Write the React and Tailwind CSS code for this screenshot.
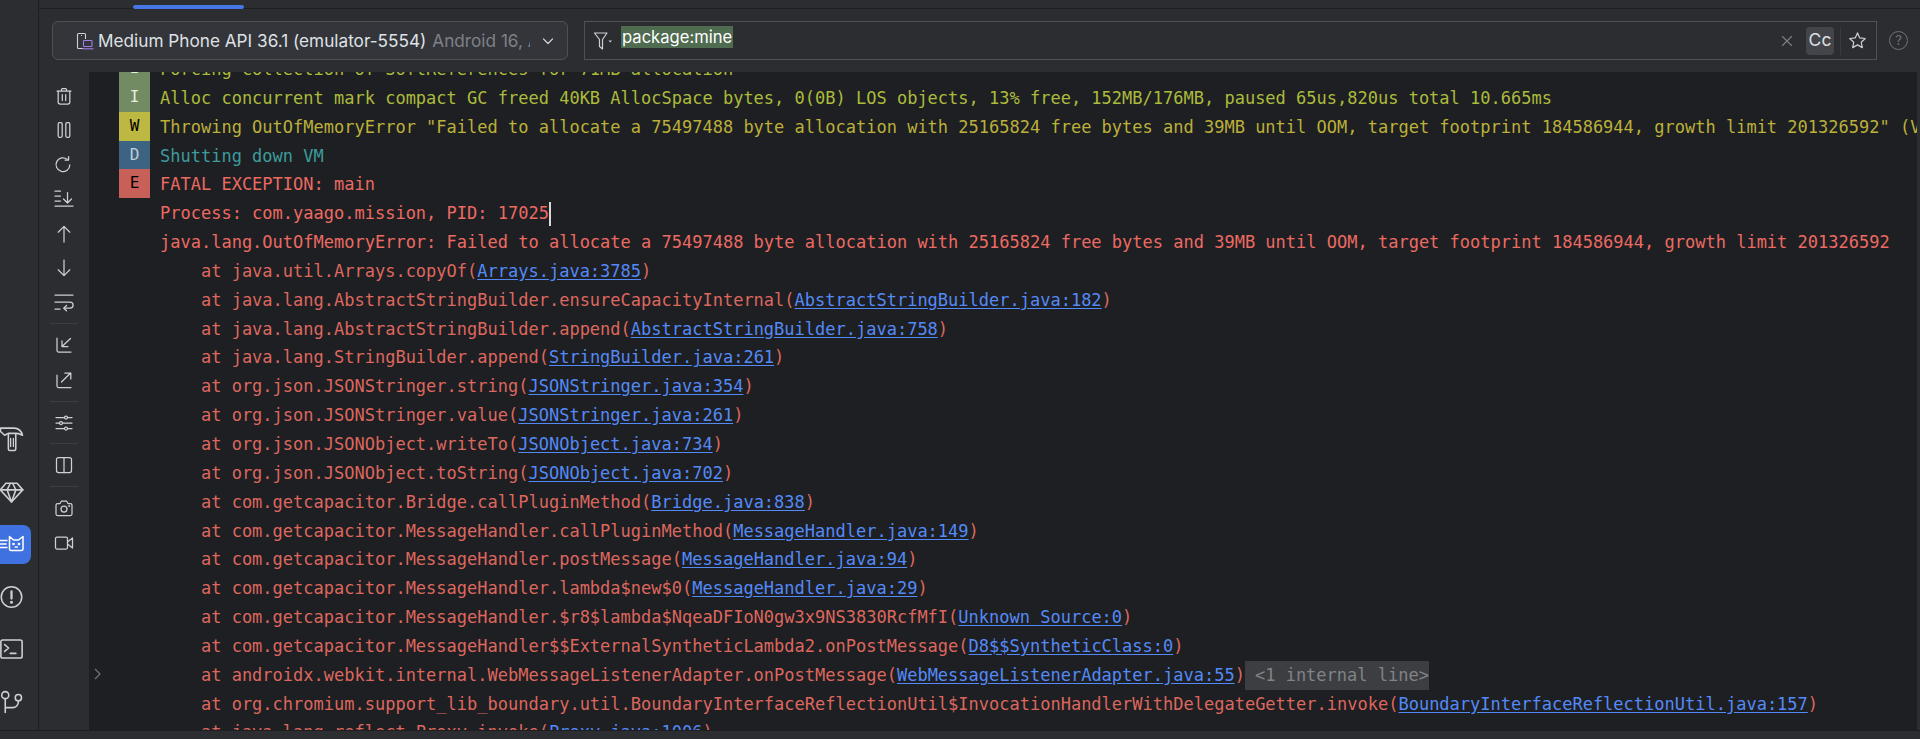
import React from "react";

const mono = "font-['DejaVu_Sans_Mono',monospace]";
const ui = "font-['Inter',sans-serif]";

const Ic = ({ size = 20, children, className = "" }) => (
  <svg width={size} height={size} viewBox="0 0 20 20" fill="none" stroke="currentColor" strokeWidth="1.25" strokeLinecap="round" strokeLinejoin="round" className={className}>
    {children}
  </svg>
);

const tools = [
  [<><path d="M3 5h14M7.5 5V3.5a1 1 0 0 1 1-1h3a1 1 0 0 1 1 1V5" /><path d="M4.2 5v11a2 2 0 0 0 2 2h7.6a2 2 0 0 0 2-2V5" /><path d="M8.3 8.5v6M11.7 8.5v6" /></>],
  [<><rect x="4.2" y="2.7" width="4" height="14.6" rx="1.2" /><rect x="11.8" y="2.7" width="4" height="14.6" rx="1.2" /></>],
  [<><path d="M15.8 9.9a6.9 6.9 0 1 1-2.6-5.6" /><path d="M14.6 1.5v3.6H11" /></>],
  [<><path d="M1 17h18M1 7h5.5M1 12h5.5M1 2.2h5.5" /><path d="M13.5 3.5v10M9.5 10l4 4 4-4" /></>],
  [<path d="M10 18V2.5M4.2 8.2 10 2.4l5.8 5.8" />],
  [<path d="M10 2v15.5M4.2 11.8 10 17.6l5.8-5.8" />],
  [<><path d="M1 3h18M1 10h15a2.7 2.7 0 0 1 0 6.2H10" /><path d="M12.5 13.5 9.8 16.2l2.7 2.6M1 17h5" /></>],
  "sep",
  [<><path d="M3 3v12.5a1.5 1.5 0 0 0 1.5 1.5H17" /><path d="M16.5 3.5 8 11.5M8 5.8v5.8h6" /></>],
  [<><path d="M3 5v11a1.5 1.5 0 0 0 1.5 1.5H17" /><path d="M7.5 12 16.6 3M10.8 3h6v6" /></>],
  "sep",
  [<><path d="M2 4.5h16M2 10h16M2 15.5h16" /><circle cx="12" cy="4.5" r="1.5" fill="#2b2d30" /><circle cx="7" cy="10" r="1.5" fill="#2b2d30" /><circle cx="12" cy="15.5" r="1.5" fill="#2b2d30" /></>],
  "sep",
  [<><rect x="2.5" y="2.5" width="15" height="15" rx="2" /><path d="M10 2.5v15" /></>],
  "sep",
  [<><path d="M2 7a1.5 1.5 0 0 1 1.5-1.5H6L7.5 3h5L14 5.5h2.5A1.5 1.5 0 0 1 18 7v9a1.5 1.5 0 0 1-1.5 1.5h-13A1.5 1.5 0 0 1 2 16z" /><circle cx="10" cy="11" r="3" /><circle cx="15.2" cy="8" r=".4" /></>],
  [<><rect x="1.5" y="4" width="12" height="12" rx="1.5" /><path d="m13.5 9 5-4v10l-5-4" /></>],
];

const side = [
  <Ic size={26}><path d="M1.200 1.300h11c3 0 5.600 2.200 6.600 5.700-2-1.200-3.800-1.600-5.400-1.500H7.300L4.500 7 1.200 4z" /><path d="M7.500 6v12a1.200 1.200 0 0 0 1.200 1.200h3.500a1.200 1.200 0 0 0 1.200-1.200V6" /><path d="M9.300 9.500v6.500M11.500 9.500v6.500" strokeWidth="1" /></Ic>,
  <Ic size={26}><path d="M5.500 3h9L19 8.300 10 18 1 8.300z" /><path d="M1 8.300h18M6.500 8.300 10 18l3.500-9.700M6.500 8.300 9 3.200M13.500 8.300 11 3.200" /></Ic>,
  null,
  <Ic size={26}><circle cx="10" cy="10" r="8.200" /><path d="M10 5.500v5.700" strokeWidth="1.800" /><circle cx="10" cy="14.200" r=".6" fill="currentColor" /></Ic>,
  <Ic size={26}><rect x="1.500" y="2.800" width="17" height="14.400" rx="1.500" /><path d="m4.500 6.500 3.200 2.700-3.200 2.700M9 13.500h4.500" /></Ic>,
  <Ic size={26}><circle cx="5" cy="4.500" r="2.800" /><circle cx="15.500" cy="6.500" r="2.500" /><path d="M5 7.300v11M5 14.500h6a4.500 4.500 0 0 0 4.500-4.500V9" /></Ic>,
];

const L = ({ children }) => <span className="text-[#548af7] underline underline-offset-2">{children}</span>;

const at = (pre, link) => (
  <>
    {"    at " + pre + "("}
    <L>{link}</L>
    {")"}
  </>
);

const rows = [
  ["I", "text-[#abbb3c]", "Forcing collection of SoftReferences for 71MB allocation"],
  ["I", "text-[#abbb3c]", "Alloc concurrent mark compact GC freed 40KB AllocSpace bytes, 0(0B) LOS objects, 13% free, 152MB/176MB, paused 65us,820us total 10.665ms"],
  ["W", "text-[#bbb03a]", 'Throwing OutOfMemoryError "Failed to allocate a 75497488 byte allocation with 25165824 free bytes and 39MB until OOM, target footprint 184586944, growth limit 201326592" (VmSize 5863696 kB)'],
  ["D", "text-[#3c9c9c]", "Shutting down VM"],
  ["E", "text-[#ec6a62]", "FATAL EXCEPTION: main"],
  ["", "text-[#ec6a62]", <>Process: com.yaago.mission, PID: 17025<span className="inline-block w-[2px] h-[24px] -mr-[2px] bg-[#d8d8d8] align-middle" /></>],
  ["", "text-[#ec6a62]", "java.lang.OutOfMemoryError: Failed to allocate a 75497488 byte allocation with 25165824 free bytes and 39MB until OOM, target footprint 184586944, growth limit 201326592"],
  ["", "", at("java.util.Arrays.copyOf", "Arrays.java:3785")],
  ["", "", at("java.lang.AbstractStringBuilder.ensureCapacityInternal", "AbstractStringBuilder.java:182")],
  ["", "", at("java.lang.AbstractStringBuilder.append", "AbstractStringBuilder.java:758")],
  ["", "", at("java.lang.StringBuilder.append", "StringBuilder.java:261")],
  ["", "", at("org.json.JSONStringer.string", "JSONStringer.java:354")],
  ["", "", at("org.json.JSONStringer.value", "JSONStringer.java:261")],
  ["", "", at("org.json.JSONObject.writeTo", "JSONObject.java:734")],
  ["", "", at("org.json.JSONObject.toString", "JSONObject.java:702")],
  ["", "", at("com.getcapacitor.Bridge.callPluginMethod", "Bridge.java:838")],
  ["", "", at("com.getcapacitor.MessageHandler.callPluginMethod", "MessageHandler.java:149")],
  ["", "", at("com.getcapacitor.MessageHandler.postMessage", "MessageHandler.java:94")],
  ["", "", at("com.getcapacitor.MessageHandler.lambda$new$0", "MessageHandler.java:29")],
  ["", "", at("com.getcapacitor.MessageHandler.$r8$lambda$NqeaDFIoN0gw3x9NS3830RcfMfI", "Unknown Source:0")],
  ["", "", at("com.getcapacitor.MessageHandler$$ExternalSyntheticLambda2.onPostMessage", "D8$$SyntheticClass:0")],
  ["", "", <>{at("androidx.webkit.internal.WebMessageListenerAdapter.onPostMessage", "WebMessageListenerAdapter.java:55")}<span className="inline-block pl-[10px] bg-[#3c3e41] text-[#808388]">{"<1 internal line>"}</span></>, true],
  ["", "", at("org.chromium.support_lib_boundary.util.BoundaryInterfaceReflectionUtil$InvocationHandlerWithDelegateGetter.invoke", "BoundaryInterfaceReflectionUtil.java:157")],
  ["", "", at("java.lang.reflect.Proxy.invoke", "Proxy.java:1006")],
];

const badge = {
  I: "bg-[#728b62] text-[#e8eee0]",
  W: "bg-[#bdb842] text-black",
  D: "bg-[#3c6482] text-[#c4ccd4]",
  E: "bg-[#c8605a] text-black",
};

export default function App() {
  return (
    <div className="w-[1920px] h-[739px] overflow-hidden flex flex-col bg-[#2b2d30] text-[#ced0d6]">
      <div className="flex h-[730px]">
        {/* tool window bar */}
        <div className="w-[38px] shrink-0 flex flex-col justify-end items-start pb-[2px]">
          {side.map((ic, i) =>
            ic ? (
              <div key={i} className="h-[52.5px] w-[25px] -ml-px flex items-center justify-center">{ic}</div>
            ) : (
              <div key={i} className="h-[52.5px] flex items-center">
                <div className="w-[31px] h-[39px] rounded-r-[8px] bg-[#3f71e0] flex items-center text-white">
                  <svg width="25" height="24" viewBox="0 0 25 24" fill="none" stroke="currentColor" strokeWidth="1.5" strokeLinecap="round" strokeLinejoin="round">
                    <path d="M0 8.500h7M0 12h6M0 15.500h7" />
                    <path d="M9.500 4.500l4 3.500h5l4.500-3.500V17a1.500 1.500 0 0 1-1.500 1.500H11A1.500 1.500 0 0 1 9.500 17z" />
                    <circle cx="13.500" cy="12" r=".6" fill="currentColor" />
                    <circle cx="19" cy="12" r=".6" fill="currentColor" />
                    <path d="M15.200 15h2.200" />
                  </svg>
                </div>
              </div>
            )
          )}
        </div>
        <div className="w-px shrink-0 bg-[#1e1f22]" />
        <div className="flex-1 min-w-0 flex flex-col">
          {/* tab strip */}
          <div className="h-[9px] shrink-0 border-b border-[#1e1f22] pl-[94px] flex items-end">
            <div className="w-[111px] h-[4px] -mb-px rounded-full bg-[#4676e6]" />
          </div>
          {/* filter toolbar */}
          <div className={`h-[63px] shrink-0 flex items-start pt-[12px] pl-[13px] ${ui}`}>
            <div className="w-[516px] h-[39px] rounded-[6px] border border-[#4e5157] bg-[#33353a] flex items-center pl-[23px] text-[17.2px]">
              <svg width="18" height="18" viewBox="0 0 18 18" fill="none" strokeWidth="1.1" className="shrink-0">
                <path d="M7 16.500H2.500a1 1 0 0 1-1-1v-13a1 1 0 0 1 1-1h6a1 1 0 0 1 1 1V7" stroke="#ced0d6" />
                <path d="M5 3.500h1" stroke="#ced0d6" />
                <rect x="7.500" y="8.500" width="8.500" height="6" rx=".8" stroke="#a37ee8" />
                <path d="M6.500 16.800h11" stroke="#a37ee8" />
              </svg>
              <span className="ml-[4px] whitespace-nowrap text-[#dfe1e5]">Medium Phone API 36.1 (emulator-5554)</span>
              <span className="ml-[6px] w-[98px] shrink-0 overflow-hidden whitespace-nowrap text-[#7e8187]">Android 16, API 36</span>
              <svg width="14" height="14" viewBox="0 0 14 14" fill="none" stroke="#ced0d6" strokeWidth="1.200" strokeLinecap="round" strokeLinejoin="round" className="ml-[11px] shrink-0">
                <path d="m2.500 5 4.500 4.500L11.500 5" />
              </svg>
            </div>
            <div className="ml-[16px] w-[1293px] h-[39px] border border-[#4e5157] flex items-center pl-[8px]">
              <svg width="20" height="20" viewBox="0 0 20 20" fill="none" stroke="#ced0d6" strokeWidth="1.200" strokeLinejoin="round">
                <path d="M1.500 2h12.500L9.500 8.500V18L6.500 15.500V8.500z" />
                <path d="M15.500 9.500h3.500l-1.750 2z" fill="#ced0d6" stroke="none" />
              </svg>
              <span className="ml-[8px] self-start mt-[4px] h-[22px] leading-[22px] px-px bg-[#4f6b50] text-white text-[16.6px]">package:mine</span>
              <div className="ml-auto flex items-center pr-[9px]">
                <svg width="14" height="14" viewBox="0 0 14 14" stroke="#7e8187" strokeWidth="1.100" strokeLinecap="round">
                  <path d="M2.500 2.500l9 9M11.500 2.500l-9 9" />
                </svg>
                <div className="ml-[12px] w-[28px] h-[28px] rounded-[4px] bg-[#43454a] flex items-center justify-center text-[17.5px] text-[#dfe1e5]">Cc</div>
                <div className="ml-[6px] w-px h-[28px] bg-[#393b40]" />
                <Ic size={19} className="ml-[7px]"><path d="m10 2 2.400 5.300 5.800.6-4.300 3.900 1.200 5.700L10 14.600l-5.100 2.900 1.200-5.700L1.800 7.900l5.800-.6z" /></Ic>
              </div>
            </div>
            <div className="ml-[12px] w-[19px] h-[19px] mt-[10px] rounded-full border border-[#6f737a] flex items-center justify-center text-[13px] text-[#6f737a]">?</div>
          </div>
          {/* body */}
          <div className="flex-1 min-h-0 flex">
            <div className="w-[50px] shrink-0 flex flex-col items-center pt-[6.800px]">
              {tools.map((t, i) =>
                t === "sep" ? (
                  <div key={i} className="h-[8.500px] flex items-center"><div className="w-[28px] h-px bg-[#3c3e42]" /></div>
                ) : (
                  <div key={i} className="h-[34.400px] flex items-center justify-center"><Ic>{t}</Ic></div>
                )
              )}
            </div>
            <div className={`w-[1828px] overflow-hidden bg-[#1e1f22] ${mono} text-[17px]`}>
              <div className="-mt-[18px]">
                {rows.map(([lv, color, content, chevron], i) => (
                  <div key={i} className="flex h-[28.850px] leading-[28.850px] whitespace-pre">
                    <div className="w-[30px] shrink-0 flex items-center pl-[4px] text-[#6f737a]">
                      {chevron && (
                        <svg width="10" height="14" viewBox="0 0 10 14" fill="none" stroke="#6f737a" strokeWidth="1.200"><path d="m2 2 5 5-5 5" /></svg>
                      )}
                    </div>
                    <div className={`w-[31px] shrink-0 text-center text-[16px] ${lv ? badge[lv] : ""}`}>{lv}</div>
                    <div className={`ml-[10px] pt-px ${color || "text-[#dd675e]"}`}>{content}</div>
                  </div>
                ))}
              </div>
            </div>
          </div>
        </div>
      </div>
      <div className="h-[9px] border-t border-[#1e1f22]" />
    </div>
  );
}
